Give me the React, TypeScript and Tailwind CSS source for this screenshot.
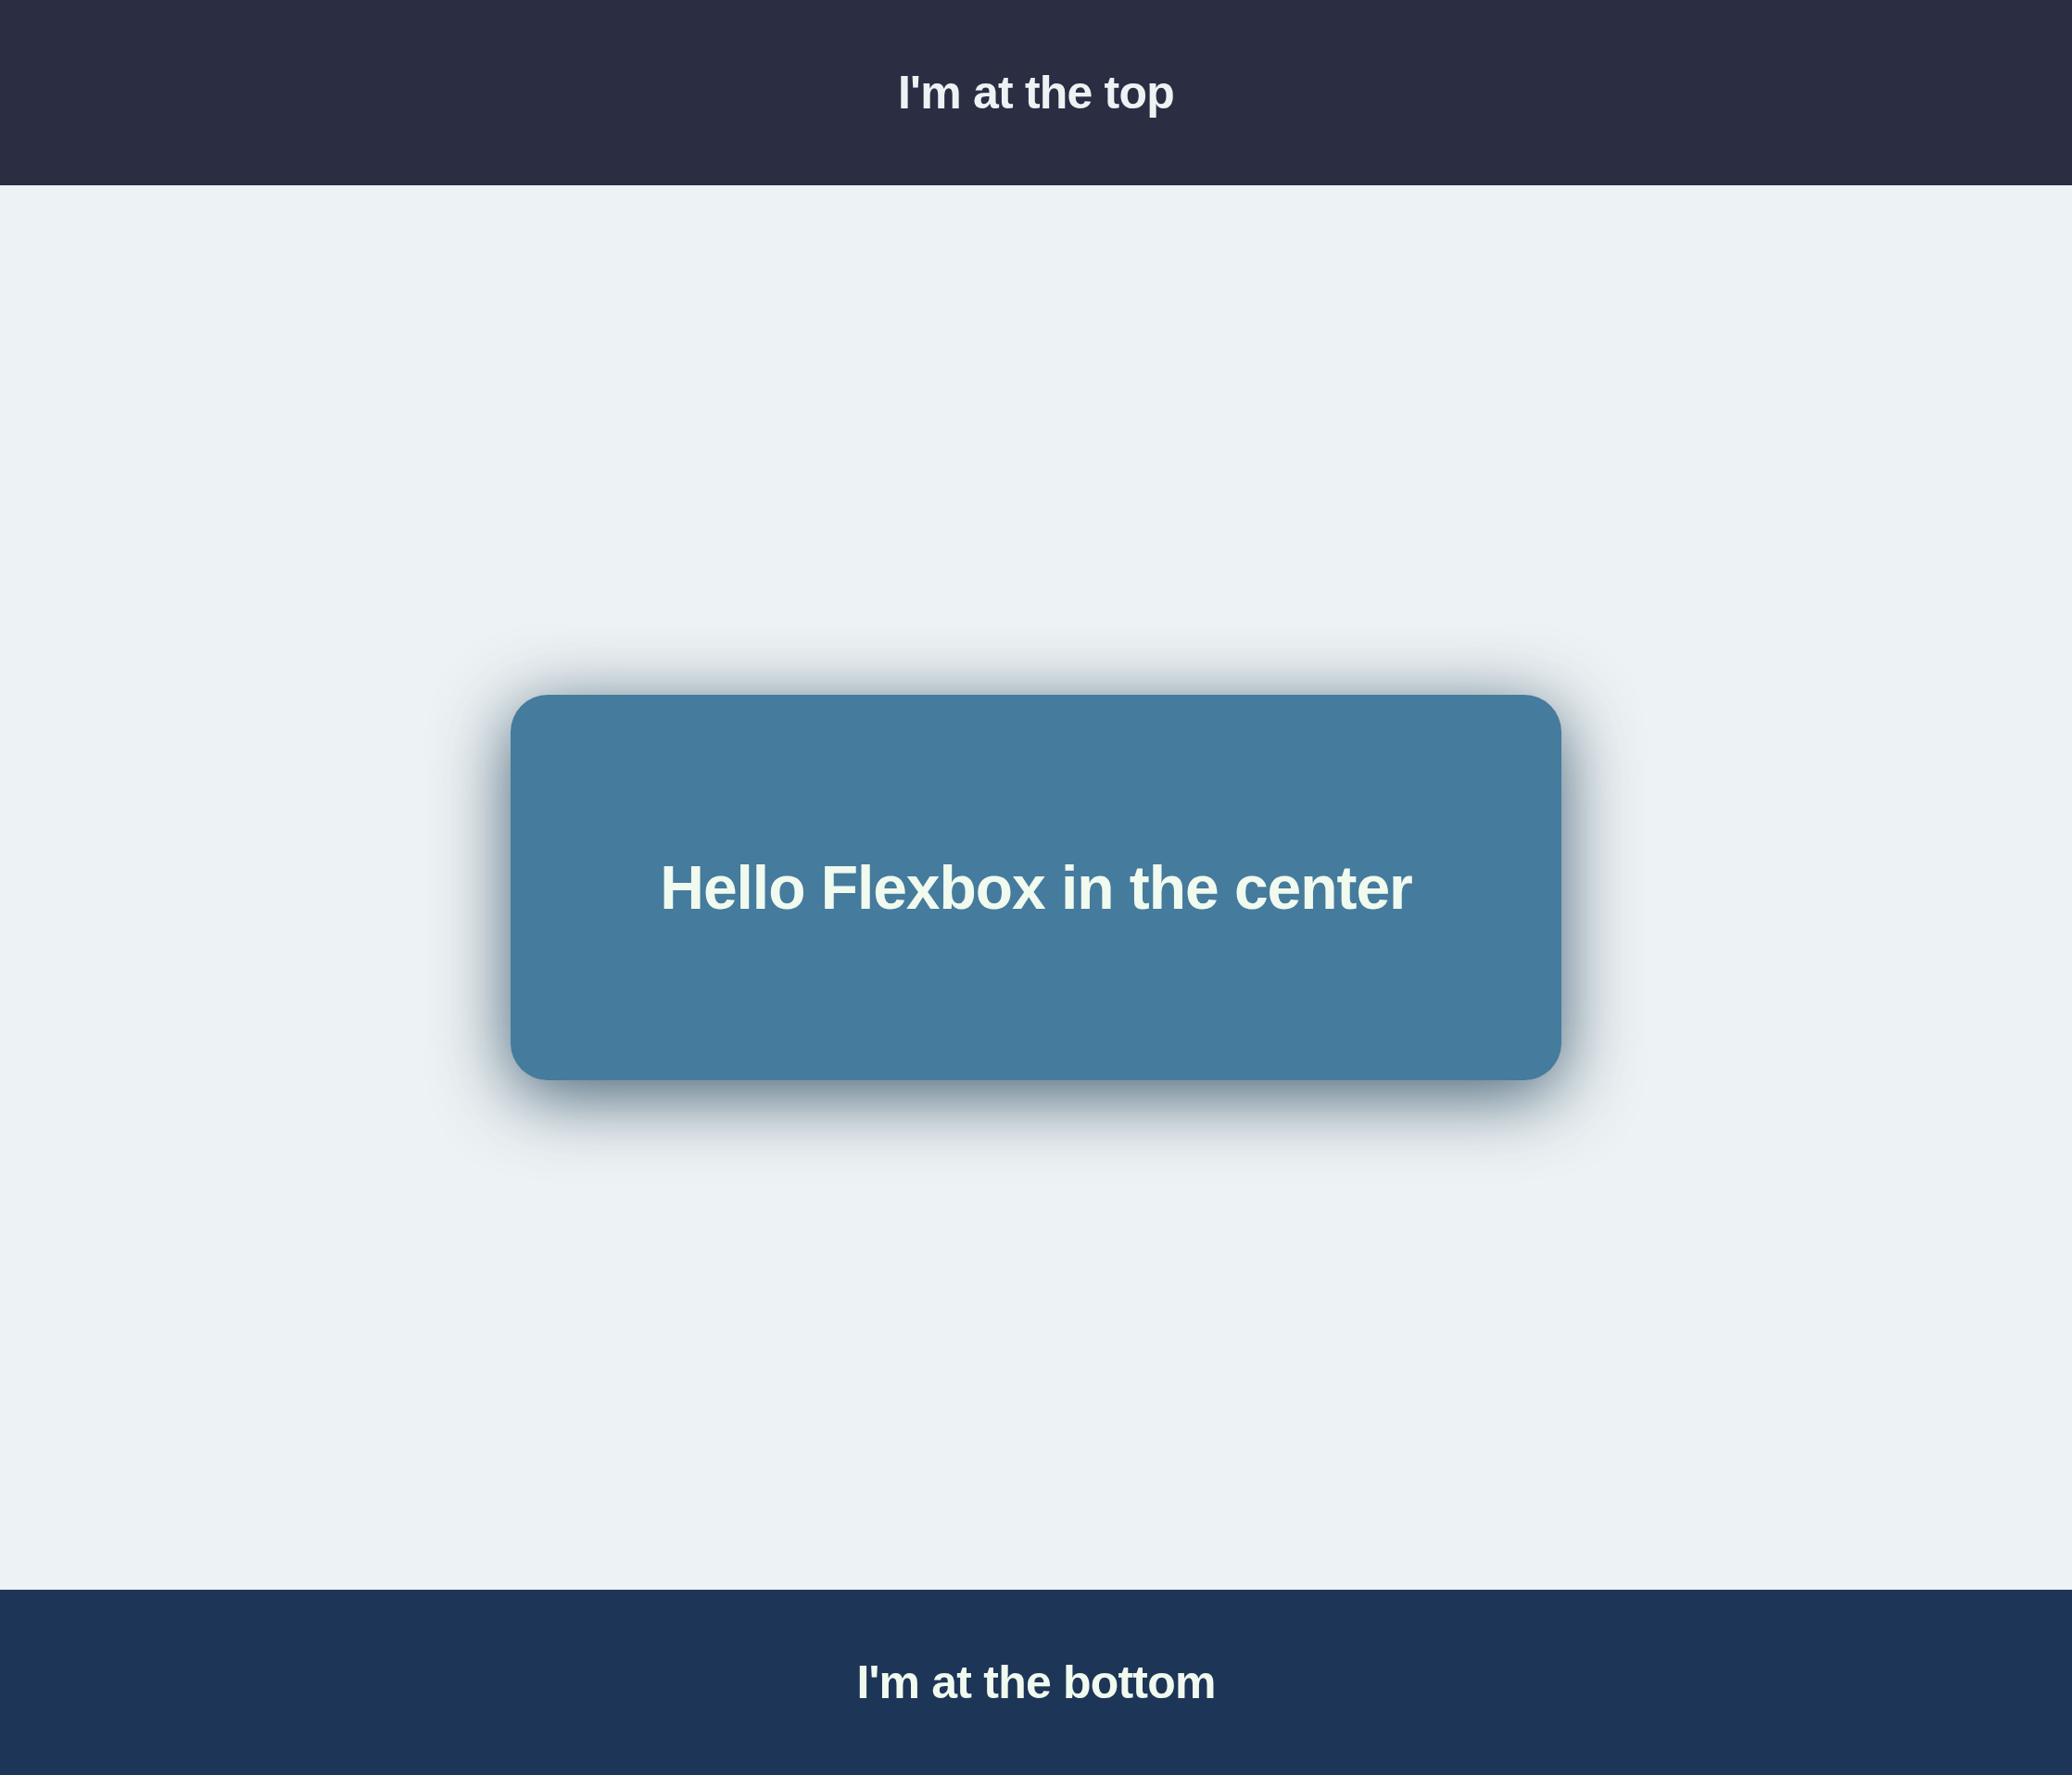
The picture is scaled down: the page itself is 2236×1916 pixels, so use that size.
import React from 'react';

const App: React.FC = () => {
  return (
    <div className="flex flex-col h-[1916px] bg-[#edf2f4] font-['Liberation_Sans',Arial,sans-serif] font-bold">
      <header className="flex items-center justify-center h-[200px] bg-[#2b2d42] text-[#edf2f4]">
        <h2 className="text-[50px] leading-none tracking-[-0.016em]">I'm at the top</h2>
      </header>

      <main className="flex flex-1 items-center justify-center">
        <div className="flex items-center justify-center w-[1134px] h-[416px] rounded-[40px] bg-[#457b9d] text-[#f1faee] shadow-[0_16px_80px_rgba(20,55,80,0.78)]">
          <h1 className="text-[66px] leading-none tracking-[-0.016em]">Hello Flexbox in the center</h1>
        </div>
      </main>

      <footer className="flex items-center justify-center h-[200px] bg-[#1d3557] text-[#f1faee]">
        <h2 className="text-[50px] leading-none tracking-[-0.016em]">I'm at the bottom</h2>
      </footer>
    </div>
  );
};

export default App;
